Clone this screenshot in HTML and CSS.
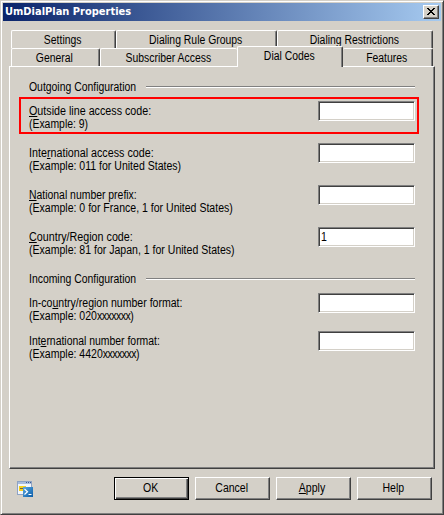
FILE: index.html
```html
<!DOCTYPE html>
<html lang="en">
<head>
<meta charset="utf-8">
<title>UmDialPlan Properties</title>
<link rel="stylesheet" href="styles.css">
</head>
<body>
<div class="window">
  <header class="titlebar">
    <span class="title">UmDialPlan Properties</span>
    <button class="close" aria-label="Close"><svg width="8" height="7" viewBox="0 0 8 7" shape-rendering="crispEdges"><path d="M0 0h2v1h1v1h2v-1h1v-1h2v1h-1v1h-1v1h-1v1h1v1h1v1h1v1h-2v-1h-1v-1h-2v1h-1v1h-2v-1h1v-1h1v-1h1v-1h-1v-1h-1v-1h-1z"/></svg></button>
  </header>

  <nav class="tabs">
    <div class="tab-row">
      <div class="tab settings"><span class="t">Settings</span></div>
      <div class="tab groups"><span class="t">Dialing Rule Groups</span></div>
      <div class="tab restrictions"><span class="t">Dialing Restrictions</span></div>
    </div>
    <div class="tab-row">
      <div class="tab general"><span class="t">General</span></div>
      <div class="tab subscriber"><span class="t">Subscriber Access</span></div>
      <div class="tab selected"><span class="t">Dial Codes</span></div>
      <div class="tab features"><span class="t">Features</span></div>
    </div>
  </nav>

  <main class="panel">
    <div class="heading"><span class="t narrow">Outgoing Configuration</span><i class="rule"></i></div>
    <div class="field highlight">
      <div class="labels"><div><span class="t wide"><u>O</u>utside line access code:</span></div><div><span class="t narrow">(Example: 9)</span></div></div>
      <div class="input"></div>
    </div>
    <div class="field">
      <div class="labels"><div><span class="t wide">Inte<u>r</u>national access code:</span></div><div><span class="t">(Example: 011 for United States)</span></div></div>
      <div class="input"></div>
    </div>
    <div class="field">
      <div class="labels"><div><span class="t narrow"><u>N</u>ational number prefix:</span></div><div><span class="t">(Example: 0 for France, 1 for United States)</span></div></div>
      <div class="input"></div>
    </div>
    <div class="field">
      <div class="labels"><div><span class="t wide"><u>C</u>ountry/Region code:</span></div><div><span class="t">(Example: 81 for Japan, 1 for United States)</span></div></div>
      <div class="input"><span class="t">1</span></div>
    </div>
    <div class="heading incoming"><span class="t narrow">Incoming Configuration</span><i class="rule"></i></div>
    <div class="field short">
      <div class="labels"><div><span class="t">In-co<u>u</u>ntry/region number format:</span></div><div><span class="t">(Example: 020<span class="mask">xxxxxxx</span>)</span></div></div>
      <div class="input"></div>
    </div>
    <div class="field short">
      <div class="labels"><div><span class="t narrow">Int<u>e</u>rnational number format:</span></div><div><span class="t">(Example: 4420<span class="mask">xxxxxxx</span>)</span></div></div>
      <div class="input"></div>
    </div>
  </main>

  <footer class="footer">
    <svg class="shell" width="16" height="16" viewBox="0 0 16 16">
      <defs><linearGradient id="blue" x1="0" y1="0" x2="1" y2="1"><stop offset="0" stop-color="#5aa8e0"/><stop offset="1" stop-color="#0a5ca8"/></linearGradient></defs>
      <rect x=".5" y=".5" width="14" height="13" fill="#f2f6fb" stroke="#8ea3c4"/>
      <rect x="1" y="1" width="13" height="2" fill="#a9bddd"/>
      <path d="M9 1.500h1M11 1.500h1M13 1.500h1" stroke="#3d5c94"/>
      <rect x="2" y="5" width="7" height="5" fill="#f6cf1d"/>
      <path d="M3 7.500h3" stroke="#6f6540"/>
      <rect x="6" y="6" width="10" height="10" fill="url(#blue)"/>
      <path d="M7.500 8l3 2.700-3 2.800M11.500 13.500h3" fill="none" stroke="#fff" stroke-width="1.200"/>
    </svg>
    <div class="buttons">
      <button class="btn default"><span class="t">OK</span></button>
      <button class="btn"><span class="t">Cancel</span></button>
      <button class="btn"><span class="t"><u>A</u>pply</span></button>
      <button class="btn"><span class="t">Help</span></button>
    </div>
  </footer>
</div>
</body>
</html>
```
FILE: styles.css
```css
* { box-sizing: border-box; }
body {
  margin: 0;
  background: #d4d0c8;
  color: #000;
  font: 12px/13px "Liberation Sans", Arial, sans-serif;
}
.window {
  width: 444px;
  height: 515px;
  padding: 1px;
  display: flex;
  flex-direction: column;
  background: #d4d0c8;
  border: 1px solid;
  border-color: #d4d0c8 #404040 #404040 #d4d0c8;
  box-shadow: inset 1px 1px #fff, inset -1px -1px #808080;
}
/* Condensed dialog lettering */
.t {
  display: inline-block;
  white-space: pre;
  transform: scaleX(.878);
  transform-origin: center;
}
.t.wide { transform: scaleX(.894); }
.t.narrow { transform: scaleX(.868); }
u { text-underline-offset: 1px; text-decoration-thickness: 1px; text-decoration-skip-ink: none; }
.mask { letter-spacing: -.6px; }

.titlebar {
  height: 18px;
  margin: 1px 1px 0;
  padding: 0 2px 0 2px;
  display: flex;
  align-items: center;
  justify-content: space-between;
  background: linear-gradient(90deg, #0a246a, #a6caf0);
}
.title {
  color: #fff;
  font: bold 11px/16px "DejaVu Sans Condensed", "DejaVu Sans", sans-serif;
  font-stretch: condensed;
}
.close {
  width: 16px;
  height: 14px;
  padding: 0 1px 1px 0;
  display: flex;
  align-items: center;
  justify-content: center;
  background: #d4d0c8;
  border: 1px solid;
  border-color: #fff #404040 #404040 #fff;
  box-shadow: inset -1px -1px #808080;
}

.tabs { margin: 9px 0 0 9px; }
.tab-row { display: flex; height: 18px; }
.tab {
  height: 18px;
  padding: 3px 2px 0 0;
  text-align: center;
  border-top: 1px solid #fff;
  border-left: 1px solid #fff;
  border-right: 1px solid #404040;
  border-radius: 2px 2px 0 0;
  box-shadow: inset -1px 0 #808080;
}
.tab .t { transform: scaleX(.868); }
.settings { width: 105px; }
.groups { width: 161px; }
.restrictions { width: 156px; }
.general { width: 89px; }
.subscriber { width: 137px; border-right: 0; box-shadow: none; }
.selected {
  position: relative;
  width: 106px;
  height: 21px;
  margin-top: -2px;
  background: #d4d0c8;
}
.features { width: 90px; border-left: 0; }

.panel {
  width: 426px;
  height: 403px;
  margin-left: 7px;
  padding: 14px 19px 0 8px;
  border: 1px solid;
  border-color: #fff #404040 #404040 #fff;
  box-shadow: inset -1px -1px #808080;
}
.panel .t, .input .t { transform-origin: left; }
.heading {
  display: flex;
  height: 16px;
  margin-left: 11px;
}
.heading .t { width: 117px; }
.rule {
  flex: 1;
  height: 2px;
  margin-top: 5px;
  background: #fff;
  border-top: 1px solid #808080;
}
.field {
  display: flex;
  justify-content: space-between;
  height: 42px;
  padding-left: 11px;
}
.field.highlight {
  width: 400px;
  height: 37px;
  margin: 0 0 9px 1px;
  padding: 2px 2px 0 8px;
  border: 2px solid #f00;
}
.labels { padding-top: 4px; }
.input {
  width: 97px;
  height: 20px;
  padding: 3px 2px;
  background: #fff;
  border: 1px solid;
  border-color: #808080 #fff #fff #808080;
  box-shadow: inset 1px 1px #404040, inset -1px -1px #d4d0c8;
}
.incoming { margin-top: 4px; height: 20px; }
.field.short { height: 38px; }

.footer {
  display: flex;
  justify-content: space-between;
  padding: 8px 10px 0 15px;
}
.shell { margin-top: 4px; }
.buttons { display: flex; gap: 6px; }
.btn {
  width: 75px;
  height: 23px;
  padding: 0 2px 1px 0;
  font: inherit;
  color: #000;
  background: #d4d0c8;
  border: 1px solid;
  border-color: #fff #404040 #404040 #fff;
  box-shadow: inset -1px -1px #808080;
}
.btn.default {
  border-color: #000;
  box-shadow: inset 1px 1px #fff, inset -1px -1px #404040, inset -2px -2px #808080;
}
```
